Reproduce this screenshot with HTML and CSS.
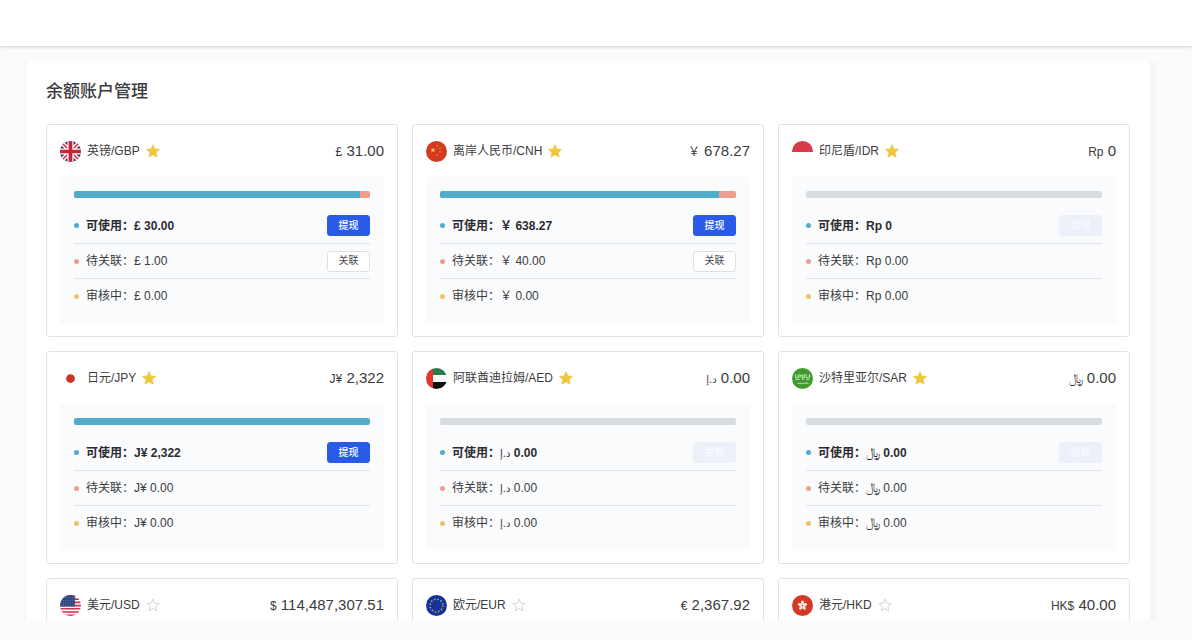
FILE: index.html
```html
<!DOCTYPE html>
<html lang="zh-CN">
<head>
<meta charset="utf-8">
<title>余额账户管理</title>
<link rel="stylesheet" href="styles.css">
</head>
<body>
<svg class="defs" aria-hidden="true">
  <defs>
    <clipPath id="round"><circle cx="12" cy="12" r="12"/></clipPath>
    <linearGradient id="gold" x1="0" y1="0" x2="0" y2="1"><stop offset="0" stop-color="#e9cf4a"/><stop offset="1" stop-color="#f3c02f"/></linearGradient>
    <path id="pt" d="M0-1 .235-.324.951-.309.38.124.588.809 0 .4-.588.809-.38.124-.951-.309-.235-.324Z"/>
    <symbol id="star-on" viewBox="0 0 16 16"><path d="M8 .8 10.1 5.7 15.5 6.2 11.4 9.7 12.7 15 8 12.2 3.3 15 4.6 9.7.5 6.2 5.9 5.7Z" fill="url(#gold)" stroke="#edc435" stroke-width=".8" stroke-linejoin="round"/></symbol>
    <symbol id="star-off" viewBox="0 0 16 16"><path d="M8 1.2 10 5.8 15 6.3 11.2 9.6 12.4 14.6 8 12 3.6 14.6 4.8 9.6 1 6.3 6 5.8Z" fill="none" stroke="#cfcfd1" stroke-width="1" stroke-linejoin="round"/></symbol>
    <symbol id="gbp" viewBox="0 0 24 24"><g clip-path="url(#round)"><path fill="#2b3c7c" d="M0 0h24v24H0z"/><path d="M0 0 24 24M24 0 0 24" stroke="#fff" stroke-width="5"/><path d="M0 0 24 24M24 0 0 24" stroke="#cc2f40" stroke-width="1.8"/><path d="M12 0v24M0 12h24" stroke="#fff" stroke-width="7"/><path d="M12 0v24M0 12h24" stroke="#c92237" stroke-width="4.2"/></g></symbol>
    <symbol id="cnh" viewBox="0 0 24 24"><circle cx="12" cy="12" r="12" fill="#d33a1f"/><g fill="#f7c35c"><use href="#pt" transform="translate(8 10.5) scale(3.3)"/><use href="#pt" transform="translate(13 5.5) scale(1.2)"/><use href="#pt" transform="translate(16 8.5) scale(1.2)"/><use href="#pt" transform="translate(16 12.5) scale(1.2)"/><use href="#pt" transform="translate(13 16) scale(1.2)"/></g></symbol>
    <symbol id="idr" viewBox="0 0 24 24"><g clip-path="url(#round)"><path fill="#fdfdfd" d="M0 0h24v24H0z"/><path fill="#d93a49" d="M0 0h24v12.5H0z"/></g></symbol>
    <symbol id="jpy" viewBox="0 0 24 24"><circle cx="12" cy="12" r="12" fill="#fefefe"/><circle cx="12" cy="12" r="5" fill="#cb3229"/></symbol>
    <symbol id="aed" viewBox="0 0 24 24"><g clip-path="url(#round)"><path fill="#fcfcfc" d="M0 0h24v24H0z"/><path fill="#2c7a4b" d="M8 0h16v8H8z"/><path fill="#101010" d="M8 16h16v8H8z"/><path fill="#e3362b" d="M0 0h8v24H0z"/></g></symbol>
    <symbol id="sar" viewBox="0 0 24 24"><circle cx="12" cy="12" r="12" fill="#3f9b2c"/><path d="M4 7v4h3V8M8 7v4M10 11V8h2v3h2V7M16 7v4h4V7M4 13h5M11 12.5h3M16 13h4M18 9h.5" fill="none" stroke="#d8edcf" stroke-width="1"/><path d="M6 17.5h11M16 16.5l3 1.5" stroke="#c5e3ba" stroke-width="1"/></symbol>
    <symbol id="usd" viewBox="0 0 24 24"><g clip-path="url(#round)"><path fill="#fbf6f8" d="M0 0h24v24H0z"/><path d="M0 1h24M0 4.7h24M0 8.4h24M0 12.1h24M0 15.8h24M0 19.5h24M0 23.2h24" stroke="#cf3050" stroke-width="1.8"/><path fill="#2e4480" d="M0 0h17v13H0z"/><path d="M1 3h16M1 6h16M1 9h16M1 11.6h16" stroke="#91a0c4" stroke-width=".8" stroke-dasharray="1 1.6"/></g></symbol>
    <symbol id="eur" viewBox="0 0 24 24"><circle cx="12" cy="12" r="12" fill="#17339b"/><circle cx="12" cy="12" r="7.3" fill="none" stroke="#a6b25f" stroke-width="1.7" stroke-dasharray="1.7 2.122"/></symbol>
    <symbol id="hkd" viewBox="0 0 24 24"><circle cx="12" cy="12" r="12" fill="#d23a24"/><g fill="#fbe9e4"><ellipse id="petal" cx="12" cy="9" rx="1.7" ry="2.6"/><use href="#petal" transform="rotate(72 12 12)"/><use href="#petal" transform="rotate(144 12 12)"/><use href="#petal" transform="rotate(216 12 12)"/><use href="#petal" transform="rotate(288 12 12)"/></g><circle cx="12" cy="12" r=".9" fill="#d23a24"/></symbol>
  </defs>
</svg>

<header class="topbar"></header>
<main class="page">
  <section class="panel">
    <h1 class="title">余额账户管理</h1>
    <div class="grid">

      <article class="card">
        <div class="head"><svg class="flag"><use href="#gbp"/></svg><h2 class="name">英镑/GBP</h2><button class="star"><svg><use href="#star-on"/></svg></button><p class="total"><bdi class="unit">£</bdi> <bdi>31.00</bdi></p></div>
        <div class="body">
          <div class="bar"><span class="seg usable" style="flex-grow:30"></span><span class="seg pending" style="flex-grow:1"></span></div>
          <ul class="rows">
            <li class="row strong"><i class="dot usable"></i><span>可使用：</span><p class="value"><bdi>£</bdi> <bdi>30.00</bdi></p><button class="btn primary">提现</button></li>
            <li class="row"><i class="dot pending"></i><span>待关联：</span><p class="value"><bdi>£</bdi> <bdi>1.00</bdi></p><button class="btn">关联</button></li>
            <li class="row"><i class="dot review"></i><span>审核中：</span><p class="value"><bdi>£</bdi> <bdi>0.00</bdi></p></li>
          </ul>
        </div>
      </article>

      <article class="card">
        <div class="head"><svg class="flag"><use href="#cnh"/></svg><h2 class="name">离岸人民币/CNH</h2><button class="star"><svg><use href="#star-on"/></svg></button><p class="total"><bdi class="unit">￥</bdi> <bdi>678.27</bdi></p></div>
        <div class="body">
          <div class="bar"><span class="seg usable" style="flex-grow:638.27"></span><span class="seg pending" style="flex-grow:40"></span></div>
          <ul class="rows">
            <li class="row strong"><i class="dot usable"></i><span>可使用：</span><p class="value"><bdi>￥</bdi> <bdi>638.27</bdi></p><button class="btn primary">提现</button></li>
            <li class="row"><i class="dot pending"></i><span>待关联：</span><p class="value"><bdi>￥</bdi> <bdi>40.00</bdi></p><button class="btn">关联</button></li>
            <li class="row"><i class="dot review"></i><span>审核中：</span><p class="value"><bdi>￥</bdi> <bdi>0.00</bdi></p></li>
          </ul>
        </div>
      </article>

      <article class="card">
        <div class="head"><svg class="flag"><use href="#idr"/></svg><h2 class="name">印尼盾/IDR</h2><button class="star"><svg><use href="#star-on"/></svg></button><p class="total"><bdi class="unit">Rp</bdi> <bdi>0</bdi></p></div>
        <div class="body">
          <div class="bar"></div>
          <ul class="rows">
            <li class="row strong"><i class="dot usable"></i><span>可使用：</span><p class="value"><bdi>Rp</bdi> <bdi>0</bdi></p><button class="btn primary" disabled>提现</button></li>
            <li class="row"><i class="dot pending"></i><span>待关联：</span><p class="value"><bdi>Rp</bdi> <bdi>0.00</bdi></p></li>
            <li class="row"><i class="dot review"></i><span>审核中：</span><p class="value"><bdi>Rp</bdi> <bdi>0.00</bdi></p></li>
          </ul>
        </div>
      </article>

      <article class="card">
        <div class="head"><svg class="flag"><use href="#jpy"/></svg><h2 class="name">日元/JPY</h2><button class="star"><svg><use href="#star-on"/></svg></button><p class="total"><bdi class="unit">J¥</bdi> <bdi>2,322</bdi></p></div>
        <div class="body">
          <div class="bar"><span class="seg usable" style="flex-grow:1"></span></div>
          <ul class="rows">
            <li class="row strong"><i class="dot usable"></i><span>可使用：</span><p class="value"><bdi>J¥</bdi> <bdi>2,322</bdi></p><button class="btn primary">提现</button></li>
            <li class="row"><i class="dot pending"></i><span>待关联：</span><p class="value"><bdi>J¥</bdi> <bdi>0.00</bdi></p></li>
            <li class="row"><i class="dot review"></i><span>审核中：</span><p class="value"><bdi>J¥</bdi> <bdi>0.00</bdi></p></li>
          </ul>
        </div>
      </article>

      <article class="card">
        <div class="head"><svg class="flag"><use href="#aed"/></svg><h2 class="name">阿联酋迪拉姆/AED</h2><button class="star"><svg><use href="#star-on"/></svg></button><p class="total"><bdi class="arabic">د.إ</bdi> <bdi>0.00</bdi></p></div>
        <div class="body">
          <div class="bar"></div>
          <ul class="rows">
            <li class="row strong"><i class="dot usable"></i><span>可使用：</span><p class="value"><bdi class="arabic">د.إ</bdi> <bdi>0.00</bdi></p><button class="btn primary" disabled>提现</button></li>
            <li class="row"><i class="dot pending"></i><span>待关联：</span><p class="value"><bdi class="arabic">د.إ</bdi> <bdi>0.00</bdi></p></li>
            <li class="row"><i class="dot review"></i><span>审核中：</span><p class="value"><bdi class="arabic">د.إ</bdi> <bdi>0.00</bdi></p></li>
          </ul>
        </div>
      </article>

      <article class="card">
        <div class="head"><svg class="flag"><use href="#sar"/></svg><h2 class="name">沙特里亚尔/SAR</h2><button class="star"><svg><use href="#star-on"/></svg></button><p class="total"><bdi class="arabic rial">﷼</bdi> <bdi>0.00</bdi></p></div>
        <div class="body">
          <div class="bar"></div>
          <ul class="rows">
            <li class="row strong"><i class="dot usable"></i><span>可使用：</span><p class="value"><bdi class="arabic rial">﷼</bdi> <bdi>0.00</bdi></p><button class="btn primary" disabled>提现</button></li>
            <li class="row"><i class="dot pending"></i><span>待关联：</span><p class="value"><bdi class="arabic rial">﷼</bdi> <bdi>0.00</bdi></p></li>
            <li class="row"><i class="dot review"></i><span>审核中：</span><p class="value"><bdi class="arabic rial">﷼</bdi> <bdi>0.00</bdi></p></li>
          </ul>
        </div>
      </article>

      <article class="card">
        <div class="head"><svg class="flag"><use href="#usd"/></svg><h2 class="name">美元/USD</h2><button class="star"><svg><use href="#star-off"/></svg></button><p class="total"><bdi class="unit">$</bdi> <bdi>114,487,307.51</bdi></p></div>
      </article>
      <article class="card">
        <div class="head"><svg class="flag"><use href="#eur"/></svg><h2 class="name">欧元/EUR</h2><button class="star"><svg><use href="#star-off"/></svg></button><p class="total"><bdi class="unit">€</bdi> <bdi>2,367.92</bdi></p></div>
      </article>
      <article class="card">
        <div class="head"><svg class="flag"><use href="#hkd"/></svg><h2 class="name">港元/HKD</h2><button class="star"><svg><use href="#star-off"/></svg></button><p class="total"><bdi class="unit">HK$</bdi> <bdi>40.00</bdi></p></div>
      </article>
    </div>
  </section>
</main>
</body>
</html>
```
FILE: styles.css
```css
* { box-sizing: border-box; }
body {
  margin: 0;
  height: 100vh;
  display: flex;
  flex-direction: column;
  overflow: hidden;
  background: #fafbfd;
  color: #3c3c40;
  font: 12px/20px "Liberation Sans", "Noto Sans CJK SC", sans-serif;
}
h1, h2, p, ul { margin: 0; padding: 0; }
button { font: inherit; margin: 0; padding: 0; border: 0; background: none; }
.defs { position: absolute; width: 0; height: 0; }
.topbar {
  flex: none;
  height: 46px;
  background: #fff;
  box-shadow: 0 1px 3px rgba(0, 0, 0, .18);
}
.page {
  flex: 1;
  min-height: 0;
  display: flex;
  padding: 16px 36px 20px 25px;
}
.panel {
  flex: 1;
  overflow: hidden;
  padding: 18px 20px 0;
  background: #fff;
  border-left: 1px solid #eef0f3;
  border-right: 6px solid #f5f6f8;
}
.title { font-size: 17px; line-height: 24px; font-weight: 500; margin-bottom: 20px; }
.grid {
  display: grid;
  grid-template-columns: repeat(3, 1fr);
  gap: 14px;
}
.card {
  min-height: 213px;
  padding: 0 13px 13px;
  border: 1px solid #e1e2e5;
  border-radius: 3px;
}
.head { display: flex; align-items: center; gap: 6px; height: 52px; }
.flag { width: 21px; height: 21px; flex: none; }
.name { font-size: 12px; font-weight: 400; }
.star { display: flex; }
.star svg { width: 14px; height: 14px; }
.total { margin-left: auto; font-size: 15px; }
.unit { font-size: 12px; }
.arabic { font-family: "DejaVu Sans", sans-serif; font-size: 10px; line-height: 12px; font-weight: 400; }
.rial { font-size: 13px; }
.body { padding: 14px 14px 10px; background: #f9fbfd; }
.bar {
  display: flex;
  height: 7px;
  margin-bottom: 10px;
  border-radius: 2px;
  overflow: hidden;
  background: #d7dbe2;
}
.seg { flex-basis: 0; }
.usable { background: #4facca; }
.pending { background: #ee9f8b; }
.review { background: #f1c067; }
.rows { list-style: none; }
.row { display: flex; align-items: center; height: 35px; }
.row + .row { border-top: 1px solid #dfe2e7; }
.strong { font-weight: 700; color: #2c2c30; }
.dot { width: 5px; height: 5px; border-radius: 50%; margin-right: 7px; }
.btn {
  width: 43px;
  height: 21px;
  margin-left: auto;
  border: 1px solid #dfe0e4;
  border-radius: 3px;
  background: #fff;
  color: #4a4a4e;
  font-size: 10px;
  line-height: 18px;
}
.primary { border-color: #2a5be8; background: #2a5be8; color: #fff; font-weight: 500; }
.primary:disabled { border-color: #edf0f9; background: #edf0f9; color: #f9fafe; }
```
